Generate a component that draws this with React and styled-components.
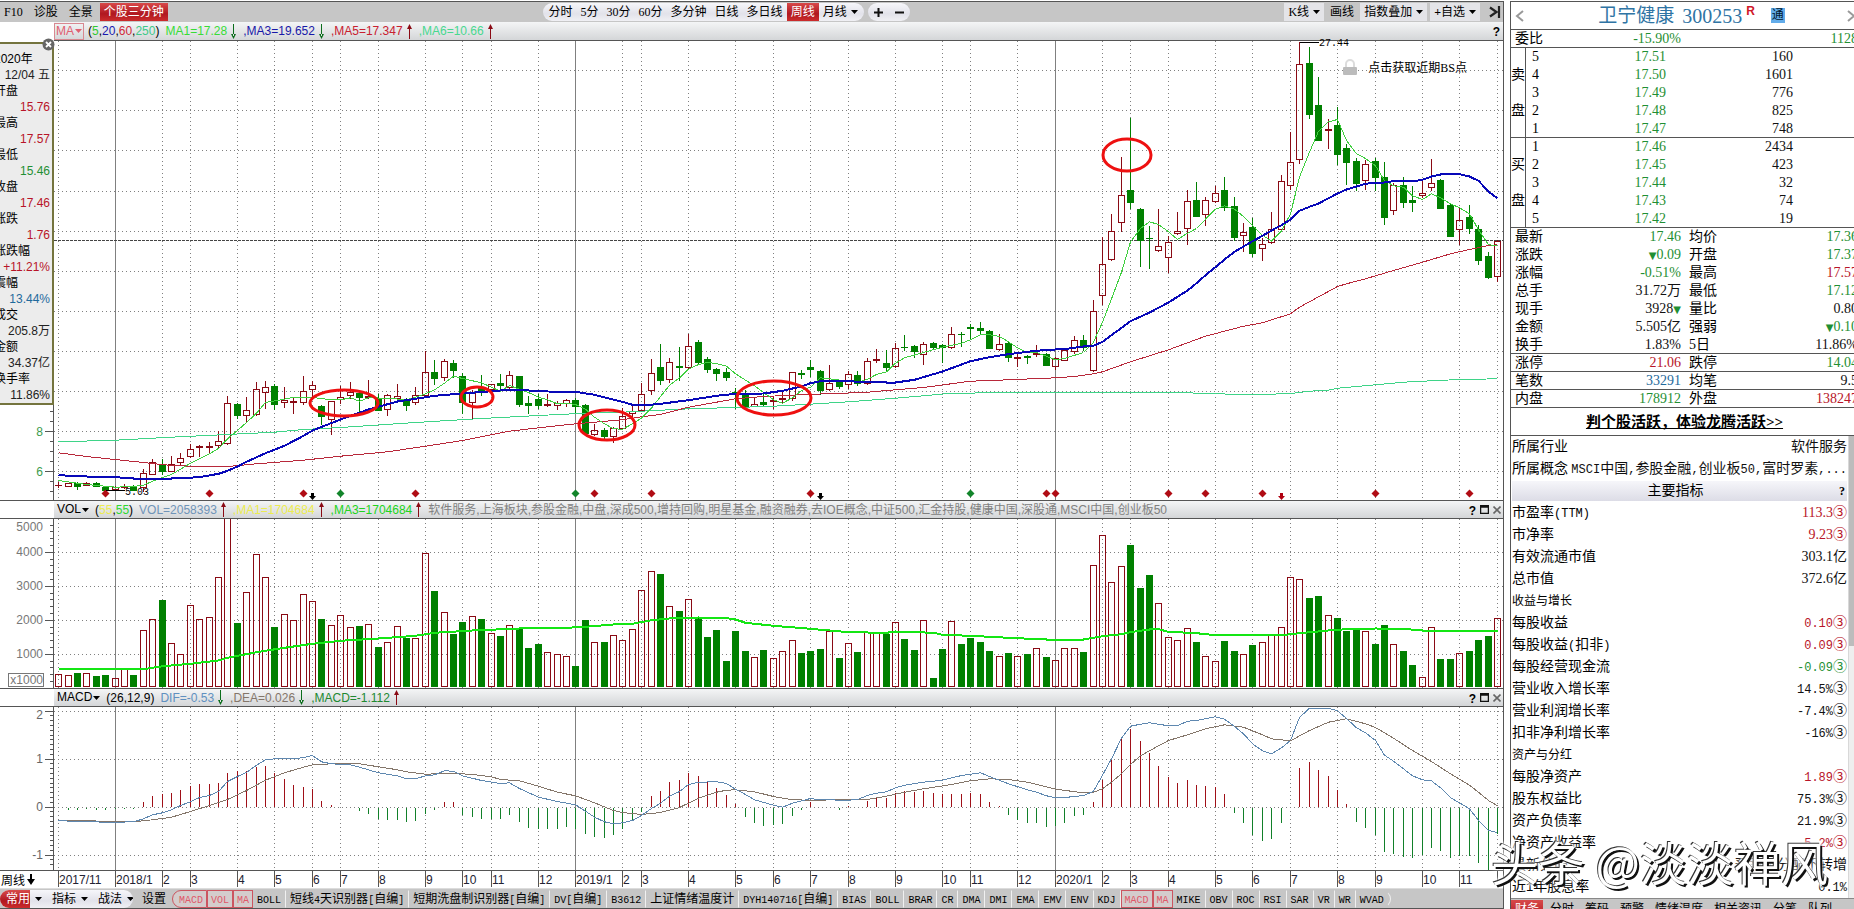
import React from "react";
import styled, { createGlobalStyle, css } from "styled-components";

const RED = "#8a0a14";
const GREEN = "#008000";
const LINE = "#555555";
const NUM_RED = "#b81428";
const NUM_GREEN = "#1f8f33";
const NUM_BLUE = "#1f6a9c";

const GlobalStyle = createGlobalStyle`
  * { box-sizing: border-box; }
  body {
    margin: 0;
    overflow: hidden;
    background: #fff;
    color: #000;
    font-family: "Liberation Sans", "Noto Sans CJK SC", sans-serif;
    font-size: 12px;
  }
  button {
    margin: 0;
    padding: 0;
    border: 0;
    background: none;
    color: inherit;
    font: inherit;
    white-space: nowrap;
  }
`;

/* ---------- data ---------- */

const BARS = 154;
const PLOT_W = 1449;
const colX = (i) => Math.floor(4.6 + 9.404 * i);

// Each candle: direction (r up, g down), high, body top, body bottom, low,
// in thirds of a pixel below the origin given for its period.
const EARLY = `r577,586,587,592 r579,581,590,590 g578,581,590,598 r577,581,587,587 g578,580,590,590
g588,592,600,602 r590,593,599,602 r582,590,592,596 g587,590,600,600 r537,550,592,604
r507,518,554,554 g507,524,545,552 r499,524,545,545 r489,506,518,522 r463,478,500,502
r466,470,473,498 r457,468,472,490 r423,454,467,474 r318,340,460,462 g341,343,376,385
r321,361,377,395 r276,298,373,377 r274,292,308,356 g282,289,344,358 r291,332,338,352
r322,333,338,370 r258,304,337,342 r273,286,298,328 g346,349,380,402 r334,334,388,434
r290,322,328,340 r276,308,317,324 g306,310,322,366 r270,320,323,326 g312,325,360,362
r313,317,359,377 r282,320,325,330 g326,328,345,360 r292,316,337,342 r184,248,317,322
g210,246,266,284 r208,214,263,272 g210,219,242,262 g250,259,338,370 r302,308,338,386
g256,296,300,316 r282,284,298,312 g252,279,285,300 r243,256,292,294 g258,259,344,350
g320,340,346,370 g312,327,345,354 r312,342,346,348 r334,341,346,358 r327,332,341,350
g325,331,350,370 g342,346,430,434 r402,420,434,436 g416,420,440,446 r412,416,440,458
r354,379,415,418 r345,364,370,382 r280,313,361,362 r207,250,302,312 g162,231,271,284
r204,217,269,278 g171,229,233,272 r132,169,233,236 g152,156,218,222 g202,207,239,248
g234,237,251,271 g234,246,263,271 g296,308,311,354 g300,316,348,350 r322,344,349,350
g312,337,344,346 r318,330,334,354 r300,325,329,336 r247,248,325,332 g240,249,252,264
g211,232,238,260 g241,243,302,314 r226,280,299,300 g270,274,288,296 r244,253,283,294
g244,255,281,286 r205,214,280,282 r177,207,211,216 g181,219,231,242 r160,175,230,232
g136,172,173,180 g166,168,185,202 r157,163,193,224 g156,159,173,175 g164,166,171,216
r111,133,173,176 g126,132,134,170 g102,112,116,146 g96,115,122,134 g122,123,174,174
r132,163,178,180 g158,159,203,214 r190,202,204,230 g196,198,203,220 r166,189,193,199
g190,192,227,227 r202,206,229,238 r178,181,211,212 r139,151,185,190 g136,151,173,182
r30,64,241,244`;
const LATE = `r711,793,886,912 r642,694,778,780 r472,586,667,695 g354,570,606,626 g626,627,722,798
g678,714,716,804 r627,739,751,754 r708,727,772,818 r636,694,700,704 r570,604,685,734
g546,600,648,648 r592,601,643,676 r558,580,604,606 g531,570,621,632 g592,618,713,720
r670,697,706,754 g654,681,759,768 r716,733,745,780 r636,688,727,730 r526,544,688,690
r396,487,556,568 r127,193,479,490 g142,189,342,356 g231,315,420,422 r357,387,391,446
g321,375,462,492 g434,444,488,554 g476,483,549,572 r480,493,542,569 g474,483,531,572
g486,531,651,674 r550,556,631,644 g532,555,606,622 g559,600,608,634 r540,580,586,592
r478,550,563,570 g538,540,624,624 g614,615,708,708 r624,661,688,732 g615,651,684,700
g676,687,782,794 g757,768,833,836 r720,723,829,845`;

const PRICE_TOP = 41;
const earlyY = (v) => 290 + v / 3 - PRICE_TOP;
const lateY = (v) => v / 3 - PRICE_TOP;

const parseCandles = (text, toY) =>
  text.split(/\s+/).map((item) => ({
    up: item[0] === "r",
    y: item.slice(1).split(",").map((v) => Math.floor(toY(Number(v)))),
  }));
const CANDLES = [...parseCandles(EARLY, earlyY), ...parseCandles(LATE, lateY)];

const VOLUME = [
  223, 226, 219, 220, 228, 225, 235, 208, 225, 91, 58, 0, 130, 163, 16, 58, 52, -68, -245, 69,
  -23, -137, -68, 81, 43, 61, -17, 4, 57, 76, 46, 82, 78, 73, 141, 127, 79, 115, 115, -140,
  -27, 37, 102, 66, 49, 57, 100, 108, 76, 88, 144, 132, 157, 163, 169, 198, 60, 127, 126, 106,
  121, 88, -29, -86, -78, 19, 33, -2, 52, 111, 90, 183, 93, 153, 172, 150, 175, 154, 121, 159,
  153, 147, 94, 174, 130, 156, 97, 97, 102, 67, 117, 150, 61, 234, 147, 64, 132, 114, 126, 153,
  169, 159, 169, 162, 145, 171, 181, 145, 145, 156, -104, -194, -53, -101, -165, -36, -75, 10, 112, 121,
  85, 126, 169, 184, 123, 153, 163, 135, 127, 106, 82, -68, -62, -6, -12, 46, 54, 93, 90, 94,
  132, 75, 133, 153, 195, 232, 82, 177, 177, 160, 153, 120, 108, 55,
];

const MACD_BARS = [
  622, 627, 628, 624, 628, 629, 626, 626, 624, 606, 588, 584, 579, 570, 558, 552, 552, 549, 519, 513,
  514, 501, 499, 519, 538, 555, 561, 568, 603, 615, 622, 622, 632, 640, 656, 657, 657, 665, 660, 640,
  629, 606, 606, 643, 648, 654, 656, 654, 644, 665, 681, 686, 686, 684, 678, 684, 700, 709, 713, 704,
  684, 662, 634, 588, 573, 546, 541, 519, 528, 544, 564, 585, 612, 648, 666, 675, 674, 671, 645, 627,
  608, 622, 622, 628, 619, 622, 603, 591, 594, 579, 573, 576, 573, 579, 583, 582, 583, 580, 583, 606,
  618, 642, 657, 666, 666, 678, 675, 666, 646, 644, 606, 540, 474, 411, 387, 423, 459, 498, 531, 549,
  540, 555, 558, 561, 583, 636, 666, 704, 720, 716, 668, 622, 504, 486, 510, 528, 571, 612, 663, 681,
  704, 755, 759, 770, 773, 764, 743, 750, 773, 767, 767, 788, 809, 700,
];

const BLUE_A = "0 554 3 558 6 560 8 564 12 564 15 560 17 550 18 541 19 528 20 514 22 488 24 466 26 436 27 420 30 387 33 357 36 333 38 325 40 316 43 309 46 302 48 298 50 300 52 303 55 304 57 313 60 334 61 343 62 345 64 340 67 329 70 316 72 310 75 309 77 301 79 288 80 278 81 272 83 272 86 274 88 276 89 276 91 268 94 243 97 212 99 200 101 191 103 184 105 178 107 176 109 168 110 166 111 154 114 92 116 66 118 36";
const BLUE_B = "120 870 121 848 122 824 123 800 124 777 125 754 126 738 127 722 128 706 129 690 130 674 131 657 132 631 133 619 134 609 136 579 137 567 138 558 139 550 140 547 141 546 142 542 144 543 145 538 146 528 147 522 149 521 150 528 151 541 152 573 153 594";
const RED_A = "0 487 3 498 7 510 12 525 16 529 18 528 21 520 26 509 30 497 35 484 39 467 43 450 48 422 52 409 55 400 57 395 60 388 62 379 64 372 67 350 72 325 75 318 78 314 80 311 82 310 86 305 89 298 92 291 97 272 101 268 106 262 108 258 109 254 110 250 111 244 114 214 118 178 122 137 126 107 128 97 131 70 132 50";
const RED_B = "136 858 137 850 139 835 142 810 145 785 148 760 150 747 152 735 153 733";
const MINT_A = "0 454 6 449 12 440 18 432 23 425 26 417 30 411 38 396 45 384 51 375 56 368 61 364 62 362 67 355 72 351 76 347 80 341 84 334 89 323 92 316 95 308 100 307 111 306 116 305 118 307 123 308 125 313 128 312 131 309 133 302 135 299 136 293 140 283 143 275 145 272 149 267 153 265";
const LIME_A = "0 570 3 582 6 590 8 588 9 584 10 572 12 552 14 518 16 490 17 474 18 445 19 420 20 396 21 368 22 336 24 326 25 320 27 320 28 325 30 328 31 322 32 332 33 322 35 323 37 328 38 320 39 310 40 298 41 278 42 257 43 264 45 277 47 302 48 285 49 296 50 306 51 320 52 328 53 340 54 338 55 342 56 356 57 380 58 400 59 415 60 416 61 400 62 383 63 353 64 318 65 284 66 262 67 236 68 222 69 216 70 219 71 227 72 250 74 286 76 328 77 338 78 322 79 300 80 290 81 262 82 265 84 272 85 276 86 266 87 252 88 244 89 218 90 202 92 186 94 170 96 158 97 148 98 133 99 133 100 138 101 154 102 172 103 186 104 186 106 208 107 204 109 186 110 155 111 95";
const LIME_B = "112 895 113 815 114 724 115 684 116 664 117 672 118 694 119 717 120 698 121 684 122 656 123 626 124 616 125 626 126 648 127 676 128 704 129 722 130 692 131 640 132 530 133 455 134 392 135 364 136 357 137 420 138 460 139 474 140 496 141 540 142 556 143 560 144 586 145 597 146 580 147 592 148 610 149 622 150 640 151 688 152 733 153 735";
const VOL_MA = "0 204 4 204 5 206 9 206 10 202 11 197 14 190 17 180 18 172 21 155 24 142 27 130 30 121 34 114 38 106 40 97 44 90 49 84 54 82 56 79 59 72 61 70 63 59 65 54 68 51 71 53 72 57 73 67 76 76 80 85 84 95 88 97 89 93 93 97 94 103 97 106 101 112 105 117 109 117 110 112 111 107 113 101 114 95 116 87 117 86 118 94 121 98 123 104 130 104 132 98 135 90 137 86 140 84 143 85 145 90 153 90";
const DIF = "0 659 1 662 4 664 5 666 8 664 9 655 10 643 11 637 12 628 13 615 14 604 15 591 16 585 17 573 18 543 19 528 20 516 21 494 22 478 23 475 25 475 26 471 27 465 28 484 29 490 31 493 32 500 34 517 36 526 37 535 38 535 39 526 40 523 41 511 42 512 43 526 45 540 47 549 48 547 49 564 51 590 53 603 55 613 56 632 57 650 58 664 59 670 60 667 61 660 62 645 63 624 64 608 65 587 66 573 67 552 68 545 70 544 71 549 72 566 73 582 74 598 76 614 77 620 78 608 79 601 80 594 81 598 84 599 85 597 86 585 87 578 88 574 89 562 90 554 92 545 94 539 96 525 98 517 99 528 101 550 103 568 104 575 105 586 106 592 107 592 108 587 109 586 110 572 111 524 112 475 113 413 114 377 115 371 116 367 118 376 119 376 120 362 121 360 123 349 124 356 125 378 126 400 127 430 128 451 129 460 130 442 131 420 132 351 133 323 135 323 136 331 137 354 138 382 139 397 140 420 141 464 142 482 143 505 144 526 145 538 146 541 147 562 148 592 149 607 150 625 151 660 152 690 153 696";
const DEA = "0 659 8 664 10 658 12 650 14 633 16 615 18 597 20 570 22 539 24 517 26 500 27 493 29 490 32 490 34 499 36 508 37 514 39 521 42 518 44 522 46 529 47 537 49 541 51 557 53 575 55 586 57 607 59 630 60 636 62 642 64 636 66 621 68 593 70 575 71 569 72 568 74 574 76 588 78 598 80 599 86 597 88 587 90 575 92 565 95 552 97 541 99 535 101 537 103 545 106 566 109 577 110 575 111 565 112 545 113 520 114 492 115 466 117 436 118 420 120 403 122 385 124 373 126 380 128 403 129 415 131 421 133 390 135 365 137 355 139 370 140 381 142 413 144 450 146 483 148 520 150 554 151 575 152 600 153 616";

const toPoints = (text, toY) => {
  const nums = text.split(" ").map(Number);
  const out = [];
  for (let i = 0; i < nums.length; i += 2) {
    out.push(`${colX(nums[i]) + 0.5},${(toY(nums[i + 1]) + 0.5).toFixed(1)}`);
  }
  return out.join(" ");
};

const MONTHS = [
  [0, "2017/11"], [6, "2018/1"], [11, "2"], [14, "3"], [19, "4"], [23, "5"], [27, "6"], [30, "7"],
  [34, "8"], [39, "9"], [43, "10"], [46, "11"], [51, "12"], [55, "2019/1"], [60, "2"], [62, "3"],
  [67, "4"], [72, "5"], [76, "6"], [80, "7"], [84, "8"], [89, "9"], [94, "10"], [97, "11"],
  [102, "12"], [106, "2020/1"], [111, "2"], [114, "3"], [118, "4"], [123, "5"], [127, "6"],
  [131, "7"], [136, "8"], [140, "9"], [145, "10"], [149, "11"], [153, ""],
];

const EVENTS = [
  [5, RED], [16, RED], [26, RED], [30, GREEN], [38, RED], [55, GREEN], [57, RED], [63, RED],
  [80, RED], [97, GREEN], [105, RED], [106, RED], [118, RED], [122, RED], [128, RED], [140, RED],
  [150, RED],
];
const DROPS = [[27, "#000"], [81, "#000"], [130, "#b00010"]];

const CIRCLES = [
  [290, 362, 34, 13], [423, 356, 16, 10], [553, 384, 28, 15], [720, 357, 37, 17], [1073, 114, 24, 16],
];

const CONCEPTS =
  "软件服务,上海板块,参股金融,中盘,深成500,增持回购,明星基金,融资融券,去IOE概念,中证500,汇金持股,健康中国,深股通,MSCI中国,创业板50";

/* ---------- shared pieces ---------- */

const MonoRun = styled.span`
  font-family: "Liberation Mono", monospace;
  font-size: ${(p) => p.$size}px;
  line-height: 1;
`;

// Sets the half-width runs of a label in the terminal's monospace face.
function Mixed({ text, size }) {
  return text
    .split(/([\x20-\x7e]+)/)
    .filter(Boolean)
    .map((part, i) =>
      /^[\x20-\x7e]/.test(part) ? <MonoRun key={i} $size={size}>{part}</MonoRun> : <span key={i}>{part}</span>
    );
}

const Caret = () => (
  <svg width="7" height="4" viewBox="0 0 7 4" aria-hidden="true">
    <path d="M0 0H7L3.5 4Z" fill="currentColor" />
  </svg>
);

const ArrowIcon = styled.svg`
  margin-left: -3px;
`;

const Arrow = ({ up }) => (
  <ArrowIcon width="7" height="15" viewBox="0 0 7 15" aria-hidden="true">
    {up ? (
      <path d="M3 3H4V15H3ZM3.5 0L6 5H1Z" fill={RED} />
    ) : (
      <path d="M3 0H4V12H3ZM3.5 15L6 10H1Z" fill="#0b6e1c" />
    )}
  </ArrowIcon>
);

/* ---------- frame ---------- */

const Page = styled.div`
  display: flex;
  gap: 6px;
  height: 100vh;
  padding-top: 1px;
  overflow: hidden;
`;

const Terminal = styled.main`
  flex: 1;
  min-width: 0;
  align-self: flex-start;
  border-top: 1px solid ${LINE};
  border-right: 1px solid ${LINE};
  border-bottom: 1px solid ${LINE};
`;

const Toolbar = styled.header`
  display: flex;
  align-items: center;
  justify-content: space-between;
  height: 20px;
  background: #c6c6c6;
  font-family: "Liberation Serif", "Noto Sans CJK SC", serif;
  line-height: 18px;
`;

const Group = styled.div`
  display: flex;
  align-items: center;
  height: 100%;
  gap: ${(p) => p.$gap || 0}px;
`;

const InfoLinks = styled(Group)`
  padding-left: 4px;
`;

const pillSurface = "linear-gradient(#f6f6fa, #e2e2ea 60%, #f0f0f4)";
const hotSurface = "linear-gradient(#d84a4a, #b01820 60%, #cc2c2c)";

const Periods = styled.div`
  display: flex;
  gap: 4px;
`;

const Pill = styled.div`
  display: flex;
  align-items: center;
  height: 18px;
  padding: 0 6px;
  gap: ${(p) => p.$gap}px;
  border-radius: 9px;
  background: ${pillSurface};
`;

const ToolButton = styled.button`
  display: inline-flex;
  align-items: center;
  gap: 4px;
  height: 18px;
  ${(p) =>
    p.$active &&
    css`
      padding: 0 4px;
      margin: 0 -4px;
      color: #fff;
      background: ${hotSurface};
    `}
  ${(p) =>
    p.$boxed &&
    css`
      padding: 0 4px;
      background: #e4e4e8;
    `}
`;

const Feature = styled(ToolButton)`
  padding: 0 4px;
  margin: 0 0 0 -4px;
`;

const EndButton = styled.button`
  display: flex;
  margin: 0 2px 0 6px;
`;

/* ---------- chart panes ---------- */

const Pane = styled.section`
  display: grid;
  grid-template-columns: 54px minmax(0, 1fr);
`;

const AxisColumn = styled.div`
  display: flex;
  flex-direction: column;
`;

const AxisHead = styled.div`
  height: ${(p) => (p.$first ? 20 : 18)}px;
  border-bottom: ${(p) => (p.$first ? "0" : `1px solid ${LINE}`)};
`;

const PaneHead = styled.div`
  display: flex;
  align-items: center;
  justify-content: space-between;
  height: ${(p) => (p.$first ? 19 : 18)}px;
  border-bottom: 1px solid ${LINE};
  background: linear-gradient(#f4f5f6, #d4d6d8);
  line-height: 16px;
  white-space: nowrap;
`;

const Readings = styled.div`
  display: flex;
  align-items: center;
  gap: 6px;
  padding-left: ${(p) => (p.$boxed ? 0 : 3)}px;
`;

const Reading = styled.span`
  color: ${(p) => p.$color};
`;

const IndicatorButton = styled.button`
  display: inline-flex;
  align-items: center;
  gap: 1px;
  line-height: 15px;
  ${(p) =>
    p.$framed &&
    css`
      padding: 0 1px;
      margin-right: -2px;
      color: #e06070;
      border: 1px solid #d88890;
    `}
`;

const HeadTools = styled.div`
  display: flex;
  align-items: center;
  gap: 3px;
  padding-right: 2px;
`;

const HeadTool = styled.button`
  display: grid;
  place-items: center;
  width: 9px;
  height: 14px;
  font-weight: bold;
`;

const Plot = styled.svg`
  display: block;
  width: 100%;
  height: ${(p) => p.$h}px;
  overflow: ${(p) => (p.$spill ? "visible" : "hidden")};
`;

const Scale = styled.svg`
  display: block;
  width: 54px;
  height: ${(p) => p.$h}px;
  font-family: "Liberation Sans", sans-serif;
  font-size: 12px;
`;

const PlotWrap = styled.div`
  position: relative;
  border-bottom: 1px solid ${LINE};
`;

const ScaleWrap = styled.div`
  border-bottom: 1px solid ${LINE};
`;

const BsButton = styled.button`
  position: absolute;
  top: 17px;
  right: 36px;
  display: flex;
  align-items: center;
  gap: 11px;
  font-family: "Liberation Serif", "Noto Sans CJK SC", serif;
`;

const isNewYear = (i, label) => i > 0 && label.includes("/1");

function Grid({ height, rows }) {
  return (
    <g shapeRendering="crispEdges" stroke="#808080">
      {MONTHS.map(([i, label]) => (
        <line
          key={i}
          x1={colX(i) + 0.5}
          x2={colX(i) + 0.5}
          y1="0"
          y2={height}
          strokeDasharray={isNewYear(i, label) ? "none" : "1 3"}
        />
      ))}
      {rows.map((y) => (
        <line key={y} x1="0" x2={PLOT_W} y1={y + 0.5} y2={y + 0.5} strokeDasharray="1 3" />
      ))}
    </g>
  );
}

function Canvas({ height, children }) {
  return (
    <svg width="100%" height="100%" viewBox={`0 0 ${PLOT_W} ${height}`} preserveAspectRatio="none" overflow="visible">
      {children}
    </svg>
  );
}

const pct = (x) => `${((x / PLOT_W) * 100).toFixed(3)}%`;

const PlotText = styled.text`
  font-family: "Liberation Mono", monospace;
  font-size: 10px;
`;

function PricePlot() {
  const h = 459;
  return (
    <Plot $h={h} $spill role="img" aria-label="周线K线图">
      <Canvas height={h}>
        <Grid height={h} rows={[29, 69, 109, 150, 190, 230, 270, 310, 350, 390, 430]} />
        <line x1="0" x2={PLOT_W} y1="199.5" y2="199.5" stroke="#444" strokeDasharray="3 1" shapeRendering="crispEdges" />
        <g shapeRendering="crispEdges">
          {CANDLES.map(({ up, y: [hi, top, bottom, lo] }, i) => {
            const x = colX(i);
            const color = up ? RED : GREEN;
            const hollow = up && bottom - top >= 2;
            return (
              <g key={i} stroke={color}>
                {hi < top && <line x1={x + 0.5} x2={x + 0.5} y1={hi} y2={top} />}
                {lo > bottom && <line x1={x + 0.5} x2={x + 0.5} y1={bottom} y2={lo + 1} />}
                {hollow ? (
                  <rect x={x - 2.5} y={top + 0.5} width="6" height={bottom - top} fill="none" />
                ) : (
                  <rect x={x - 3} y={top} width="7" height={bottom - top + 1} fill={color} stroke="none" />
                )}
              </g>
            );
          })}
        </g>
        <g fill="none" shapeRendering="crispEdges">
          <polyline points={toPoints(MINT_A, earlyY)} stroke="#3fd488" />
          <polyline points={`${toPoints(RED_A, earlyY)} ${toPoints(RED_B, lateY)}`} stroke="#b8283a" />
          <polyline points={`${toPoints(LIME_A, earlyY)} ${toPoints(LIME_B, lateY)}`} stroke="#3fcf3f" />
          <polyline points={`${toPoints(BLUE_A, earlyY)} ${toPoints(BLUE_B, lateY)}`} stroke="#0808b8" strokeWidth="2" />
        </g>
        <g fill="none" stroke="#ee1010" strokeWidth="3">
          {CIRCLES.map(([cx, cy, rx, ry]) => (
            <ellipse key={cx} cx={cx} cy={cy} rx={rx} ry={ry} />
          ))}
        </g>
        {EVENTS.map(([i, color]) => (
          <path key={i} d={`M${colX(i) + 0.5} 448.5l4 4l-4 4l-4 -4z`} fill={color === RED ? "#b00c14" : "#12852a"} />
        ))}
        {DROPS.map(([i, color]) => (
          <path key={i} d={`M${colX(i) - 1} 452h3v3h2l-3.5 4l-3.5 -4h2z`} fill={color} />
        ))}
        <path d="M1245.5 1.5H1265M52 449.5H71" stroke="#000" fill="none" shapeRendering="crispEdges" />
      </Canvas>
      <PlotText x={pct(1265)} y="5">27.44</PlotText>
      <PlotText x={pct(71)} y="454">5.03</PlotText>
    </Plot>
  );
}

function VolumePlot() {
  const h = 169;
  const toY = (v) => 600 + v / 3 - 519;
  const base = 168;
  return (
    <Plot $h={h} role="img" aria-label="成交量">
      <Canvas height={h}>
        <Grid height={h} rows={[33, 67, 101, 135]} />
        <g shapeRendering="crispEdges">
          {VOLUME.slice(0, BARS).map((v, i) => {
            const x = colX(i);
            const y = Math.floor(toY(v));
            return CANDLES[i].up ? (
              <rect key={i} x={x - 2.5} y={y + 0.5} width="6" height={base - y - 1} fill="none" stroke={RED} />
            ) : (
              <rect key={i} x={x - 3} y={y} width="7" height={base - y} fill={GREEN} />
            );
          })}
        </g>
        <polyline points={toPoints(VOL_MA, toY)} fill="none" stroke="#14e614" strokeWidth="2" shapeRendering="crispEdges" />
      </Canvas>
    </Plot>
  );
}

function MacdPlot() {
  const h = 163;
  const toY = (v) => 600 + v / 3 - 707;
  const zero = 100;
  return (
    <Plot $h={h} role="img" aria-label="MACD">
      <Canvas height={h}>
        <Grid height={h} rows={[4, 52, 100, 148]} />
        <g shapeRendering="crispEdges">
          {MACD_BARS.map((v, i) => {
            const y = Math.round(toY(v) - 0.3);
            if (y === zero) return null;
            return (
              <line
                key={i}
                x1={colX(i) + 0.5}
                x2={colX(i) + 0.5}
                y1={y < zero ? y : zero + 1}
                y2={y < zero ? zero : y + 1}
                stroke={y < zero ? "#a01018" : "#12802a"}
              />
            );
          })}
        </g>
        <polyline points={toPoints(DEA, toY)} fill="none" stroke="#84766a" shapeRendering="crispEdges" />
        <polyline points={toPoints(DIF, toY)} fill="none" stroke="#5f88b0" shapeRendering="crispEdges" />
      </Canvas>
    </Plot>
  );
}

function Ticks({ from, to, step, major, every }) {
  const marks = [];
  for (let n = 0, y = from; y < to; n += 1, y = from + n * step) {
    const big = (n - major + every * 20) % every === 0;
    marks.push(<line key={n} x1={big ? 45 : 50} x2="54" y1={Math.floor(y) + 0.5} y2={Math.floor(y) + 0.5} />);
  }
  return (
    <g stroke={LINE} shapeRendering="crispEdges">
      {marks}
      <line x1="53.5" x2="53.5" y1="0" y2={to + 10} />
    </g>
  );
}

const ScaleLabels = ({ items, color }) => (
  <g fill={color} textAnchor="end">
    {items.map(([y, label]) => (
      <text key={label} x="43" y={y + 4}>{label}</text>
    ))}
  </g>
);

/* ---------- day details card ---------- */

const DayCard = styled.aside`
  position: relative;
  margin-left: -6px;
  width: 60px;
  height: 363px;
  padding: 7px 2px 0 0;
  border: 2px solid #74743e;
  border-left: 0;
  background: #ececec;
  line-height: 16px;
`;

const DayList = styled.dl`
  margin: 0;
`;

const DayLabel = styled.dt`
  height: 16px;
  white-space: nowrap;
`;

const DayValue = styled.dd`
  height: 16px;
  margin: 0;
  text-align: right;
  white-space: nowrap;
  color: ${(p) => p.$color || "#222"};
`;

const CloseButton = styled.button`
  position: absolute;
  top: -6px;
  right: -3px;
  width: 13px;
  height: 13px;
`;

const DAY = [
  ["2020年", "12/04 五"],
  ["开盘", "15.76", NUM_RED],
  ["最高", "17.57", NUM_RED],
  ["最低", "15.46", NUM_GREEN],
  ["收盘", "17.46", NUM_RED],
  ["涨跌", "1.76", NUM_RED],
  ["涨跌幅", "+11.21%", NUM_RED],
  ["震幅", "13.44%", NUM_BLUE],
  ["成交", "205.8万"],
  ["金额", "34.37亿"],
  ["换手率", "11.86%"],
];

/* ---------- date row and indicator tabs ---------- */

const DateRow = styled.div`
  display: grid;
  grid-template-columns: 54px minmax(0, 1fr);
  height: 17px;
`;

const PeriodButton = styled.button`
  display: flex;
  align-items: center;
  gap: 1px;
  height: 17px;
  padding-left: 1px;
`;

const TabBar = styled.nav`
  display: flex;
  align-items: center;
  height: 20px;
  background: #c6c6c6;
  border-top: 1px solid #dcdcdc;
  line-height: 18px;
`;

const MenuGroup = styled.div`
  display: flex;
  align-items: center;
  height: 18px;
  gap: 10px;
  width: 133px;
  border-radius: 9px;
  overflow: hidden;
  background: ${pillSurface};
`;

const MenuButton = styled.button`
  display: flex;
  align-items: center;
  gap: 5px;
  height: 18px;
`;

const Hot = styled.span`
  padding: 0 0 0 6px;
  color: #fff;
  background: ${hotSurface};
`;

const SettingsButton = styled.button`
  margin: 0 6px 0 9px;
`;

const Tab = styled.button`
  display: flex;
  flex-shrink: 0;
  align-items: center;
  height: 18px;
  padding: 0 4px 0 3px;
  border: 1px solid transparent;
  border-right-color: #f0f0f0;
  ${(p) =>
    p.$on &&
    css`
      padding-right: 3px;
      color: #e05868;
      border-color: #cc5560;
      background: #d4cccc;
    `}
  ${(p) =>
    p.$edge === "first" &&
    css`
      padding-left: 6px;
      border-radius: 9px 0 0 9px;
    `}
  ${(p) =>
    p.$edge === "last" &&
    css`
      padding-right: 6px;
      border-radius: 0 9px 9px 0;
    `}
`;

const TABS = [
  "*MACD", "*VOL", "*MA", "BOLL", "短线4天识别器[自编]", "短期洗盘制识别器[自编]", "DV[自编]", "B3612",
  "上证情绪温度计", "DYH140716[自编]", "BIAS", "BOLL", "BRAR", "CR", "DMA", "DMI", "EMA", "EMV", "ENV",
  "KDJ", "*MACD", "*MA", "MIKE", "OBV", "ROC", "RSI", "SAR", "VR", "WR", "WVAD",
];

/* ---------- quote panel ---------- */

const Quote = styled.aside`
  flex: 0 0 344px;
  border-top: 1px solid ${LINE};
  border-left: 1px solid ${LINE};
  overflow: hidden;
  font-family: "Liberation Serif", "Noto Sans CJK SC", serif;
  font-size: 14px;
  line-height: 16px;
`;

const QuoteHead = styled.div`
  display: flex;
  align-items: center;
  justify-content: space-between;
  height: 28px;
  padding-left: 4px;
  border-bottom: 1px solid ${LINE};
`;

const StockName = styled.h1`
  display: flex;
  align-items: center;
  gap: 8px;
  margin: 0;
  padding-left: 14px;
  color: #2f74a4;
  font-size: 19px;
  font-weight: normal;
  line-height: 28px;
`;

const StockCode = styled.span`
  font-size: 20px;
`;

const Rating = styled.sup`
  align-self: flex-start;
  margin-left: -4px;
  color: #d01828;
  font: bold 12px/18px "Liberation Sans", sans-serif;
`;

const LinkBadge = styled.span`
  margin-left: 8px;
  padding: 0 1px;
  color: #001830;
  background: #62acea;
  font-size: 12px;
  line-height: 15px;
`;

const NavButton = styled.button`
  display: flex;
  width: 9px;
  color: #999;
`;

const Book = styled.table`
  width: calc(100% + 4px);
  table-layout: fixed;
  border-collapse: separate;
  border-spacing: 0;
`;

const BookRow = styled.tr`
  & > * {
    height: 18px;
    padding: 0;
    font-weight: normal;
    text-align: left;
    white-space: nowrap;
    border-bottom: ${(p) => (p.$ruled ? `1px solid ${LINE}` : "0")};
  }
`;

const SideCell = styled.th`
  && {
    line-height: 36px;
    white-space: normal;
    word-break: break-all;
    border-right: 1px solid ${LINE};
    border-bottom: 1px solid ${LINE};
  }
`;

const LabelCell = styled.th`
  && {
    padding-left: ${(p) => p.$pad}px;
  }
`;

const ValueCell = styled.td`
  && {
    text-align: right;
    color: ${(p) => p.$color || "#111"};
  }
`;

const Promo = styled.div`
  display: grid;
  place-items: center;
  height: 28px;
  border-bottom: 1px solid ${LINE};
`;

const PromoLink = styled.a`
  padding-left: 4px;
  color: #000;
  font-size: 15px;
  font-weight: bold;
`;

const Facts = styled.div`
  display: flex;
  height: 462px;
`;

const FactList = styled.dl`
  flex: 1;
  min-width: 0;
  margin: 0;
  padding: 0 1px;
`;

const Fact = styled.div`
  display: flex;
  align-items: center;
  justify-content: space-between;
  height: 22px;
  white-space: nowrap;
`;

const FactName = styled.dt`
  font-size: ${(p) => (p.$section ? 12 : 14)}px;
`;

const FactValue = styled.dd`
  margin: 0;
  color: ${(p) => p.$color || "#111"};
`;

const FactTitle = styled(Fact)`
  height: 20px;
  margin: 1px 0;
  padding-right: 2px;
  background: linear-gradient(#f6f6fa, #dcdce6);
`;

const TitleText = styled.dt`
  flex: 1;
  text-align: center;
`;

const TitleHelp = styled.dd`
  margin: 0;
  font-size: 12px;
  font-weight: bold;
`;

const ScrollTrack = styled.div`
  width: 6px;
  background: #eeeeee;
  border-left: 1px solid #d8d8d8;
`;

const ScrollThumb = styled.div`
  height: 210px;
  background: #bcbcbc;
`;

const QuoteTabs = styled.nav`
  display: flex;
  align-items: center;
  gap: 11px;
  height: 20px;
  background: #c6c6c6;
  border-top: 1px solid #888;
  font-size: 12px;
`;

const QuoteTab = styled.button`
  height: 18px;
  ${(p) =>
    p.$on &&
    css`
      padding: 0 4px;
      margin-right: -4px;
      color: #fff;
      background: linear-gradient(#d84a4a, #b01820);
    `}
`;

const Watermark = styled.div`
  position: fixed;
  right: 26px;
  bottom: 22px;
  color: #fff;
  font: 47px/52px "Noto Sans CJK SC", sans-serif;
  text-shadow: 2px 2px 0 #111, -1px -1px 0 #333, 0 0 4px #fff, 0 0 4px #fff, 0 0 5px #fff;
  white-space: nowrap;
  pointer-events: none;
`;

const SELL = [[5, "17.51", 160], [4, "17.50", 1601], [3, "17.49", 776], [2, "17.48", 825], [1, "17.47", 748]];
const BUY = [[1, "17.46", 2434], [2, "17.45", 423], [3, "17.44", 32], [4, "17.43", 74], [5, "17.42", 19]];

const STATS = [
  ["最新", "17.46", NUM_GREEN, "均价", "17.36", NUM_GREEN],
  ["涨跌", "▼0.09", NUM_GREEN, "开盘", "17.37", NUM_GREEN],
  ["涨幅", "-0.51%", NUM_GREEN, "最高", "17.57", NUM_RED],
  ["总手", "31.72万", "", "最低", "17.12", NUM_GREEN],
  ["现手", "3928▼", "", "量比", "0.80", ""],
  ["金额", "5.505亿", "", "强弱", "▼0.10", NUM_GREEN],
  ["换手", "1.83%", "", "5日", "11.86%", "", true],
  ["涨停", "21.06", NUM_RED, "跌停", "14.04", NUM_GREEN, true],
  ["笔数", "33291", NUM_BLUE, "均笔", "9.5", "", true],
  ["内盘", "178912", NUM_GREEN, "外盘", "138247", NUM_RED, true],
];

const FACTS = [
  ["市盈率(TTM)", "113.3③", NUM_RED, true],
  ["市净率", "9.23③", NUM_RED, true],
  ["有效流通市值", "303.1亿", "", true],
  ["总市值", "372.6亿", "", true],
  ["收益与增长"],
  ["每股收益", "0.10③", NUM_RED],
  ["每股收益(扣非)", "0.09③", NUM_RED],
  ["每股经营现金流", "-0.09③", NUM_GREEN],
  ["营业收入增长率", "14.5%③"],
  ["营业利润增长率", "-7.4%③"],
  ["扣非净利增长率", "-16%③"],
  ["资产与分红"],
  ["每股净资产", "1.89③", NUM_RED],
  ["股东权益比", "75.3%③"],
  ["资产负债率", "21.9%③"],
  ["净资产收益率", "5.2%③", NUM_RED],
  ["最新分配", "预案不分配不转增"],
  ["近1年股息率", "0.1%"],
];

const Down = styled.span`
  color: ${NUM_GREEN};
  font-family: "DejaVu Sans", sans-serif;
  font-size: 10px;
  line-height: 1;
`;

const withMarks = (text) =>
  text.split(/(▼)/).map((part, i) => (part === "▼" ? <Down key={i}>▼</Down> : part));

function OrderSide({ name, rows }) {
  return rows.map(([level, price, volume], i) => (
    <BookRow key={level} $ruled={i === 4}>
      {i === 0 && <SideCell rowSpan={5} scope="rowgroup">{name}</SideCell>}
      <LabelCell scope="row" $pad={6}>{level}</LabelCell>
      <ValueCell $color={NUM_GREEN}>{price}</ValueCell>
      <ValueCell>{volume}</ValueCell>
      <td />
    </BookRow>
  ));
}

function PairColumns() {
  return (
    <colgroup>
      <col width="50" />
      <col width="120" />
      <col width="60" />
      <col />
    </colgroup>
  );
}

function PaneTools({ helpOnly }) {
  return (
    <HeadTools>
      <HeadTool aria-label="帮助">?</HeadTool>
      {!helpOnly && (
        <>
          <HeadTool aria-label="最大化">
            <svg width="9" height="9" viewBox="0 0 9 9">
              <path d="M0.5 0.5H8.5V8.5H0.5Z M0 2H9" fill="none" stroke="#111" strokeWidth="1.5" />
            </svg>
          </HeadTool>
          <HeadTool aria-label="关闭">
            <svg width="8" height="8" viewBox="0 0 8 8">
              <path d="M0.5 0.5L7.5 7.5M7.5 0.5L0.5 7.5" stroke="#666" strokeWidth="1.6" />
            </svg>
          </HeadTool>
        </>
      )}
    </HeadTools>
  );
}

function PeriodPicker() {
  return (
    <Periods>
      <Pill $gap={8}>
        {["分时", "5分", "30分", "60分", "多分钟", "日线", "多日线"].map((p) => (
          <ToolButton key={p}>{p}</ToolButton>
        ))}
        <ToolButton $active>周线</ToolButton>
        <ToolButton>月线<Caret /></ToolButton>
      </Pill>
      <Pill $gap={12}>
        <ToolButton aria-label="放大">
          <svg width="9" height="9" viewBox="0 0 9 9"><path d="M4.5 0V9M0 4.5H9" stroke="#111" strokeWidth="2" /></svg>
        </ToolButton>
        <ToolButton aria-label="缩小">
          <svg width="9" height="9" viewBox="0 0 9 9"><path d="M0 4.5H9" stroke="#111" strokeWidth="2" /></svg>
        </ToolButton>
      </Pill>
    </Periods>
  );
}

export default function App() {
  return (
    <Page>
      <GlobalStyle />
      <Terminal>
        <Toolbar>
          <InfoLinks $gap={11}>
            <ToolButton>F10</ToolButton>
            <ToolButton>诊股</ToolButton>
            <ToolButton>全景</ToolButton>
            <Feature $active>个股三分钟</Feature>
          </InfoLinks>
          <PeriodPicker />
          <Group $gap={3}>
            <ToolButton $boxed>K线<Caret /></ToolButton>
            <ToolButton>&nbsp;画线&nbsp;</ToolButton>
            <ToolButton $boxed>指数叠加<Caret /></ToolButton>
            <ToolButton $boxed><span><b>+</b>自选</span><Caret /></ToolButton>
            <EndButton aria-label="收起">
              <svg width="12" height="12" viewBox="0 0 12 12">
                <path d="M1 1.5L7.5 6L1 10.5M10 0V12" fill="none" stroke="#222" strokeWidth="2.2" />
              </svg>
            </EndButton>
          </Group>
        </Toolbar>

        <Pane>
          <AxisColumn>
            <AxisHead $first />
            <DayCard>
              <CloseButton aria-label="关闭">
                <svg width="13" height="13" viewBox="0 0 13 13">
                  <circle cx="6.5" cy="6.5" r="6" fill="#666" />
                  <path d="M4 4L9 9M9 4L4 9" stroke="#fff" strokeWidth="1.8" />
                </svg>
              </CloseButton>
              <DayList>
                {DAY.map(([label, value, color]) => (
                  <React.Fragment key={label}>
                    <DayLabel>{label}</DayLabel>
                    <DayValue $color={color}>{value}</DayValue>
                  </React.Fragment>
                ))}
              </DayList>
            </DayCard>
            <ScaleWrap>
              <Scale $h={95}>
                <Ticks from={6} to={95} step={10} major={2} every={4} />
                <ScaleLabels color="#3c9c4c" items={[[27, "8"], [67, "6"]]} />
              </Scale>
            </ScaleWrap>
          </AxisColumn>
          <div>
            <PaneHead $first>
              <Readings $boxed>
                <IndicatorButton $framed>MA<Caret /></IndicatorButton>
                <span>
                  (<Reading $color="#30c830">5</Reading>,<Reading $color="#1818b0">20</Reading>,
                  <Reading $color="#d02838">60</Reading>,<Reading $color="#40c888">250</Reading>)
                </span>
                <Reading $color="#38dc38">MA1=17.28</Reading><Arrow />
                <Reading $color="#1818a8">,MA3=19.652</Reading><Arrow />
                <Reading $color="#c82030">,MA5=17.347</Reading><Arrow up />
                <Reading $color="#48d890">,MA6=10.66</Reading><Arrow up />
              </Readings>
              <PaneTools helpOnly />
            </PaneHead>
            <PlotWrap>
              <PricePlot />
              <BsButton>
                <svg width="14" height="16" viewBox="0 0 14 16">
                  <path d="M3 9V5a4 4 0 0 1 8 0v4" fill="none" stroke="#dcdcdc" strokeWidth="2" />
                  <rect x="0" y="8" width="14" height="8" rx="1" fill="#bcbcbc" />
                </svg>
                点击获取近期BS点
              </BsButton>
            </PlotWrap>
          </div>
        </Pane>

        <Pane>
          <AxisColumn>
            <AxisHead />
            <ScaleWrap>
              <Scale $h={169}>
                <Ticks from={6} to={168} step={6.8} major={4} every={5} />
                <ScaleLabels color="#777" items={[[8, "5000"], [33, "4000"], [67, "3000"], [101, "2000"], [135, "1000"], [161, "x1000"]]} />
                <rect x="8.5" y="154.5" width="35" height="13" fill="none" stroke="#777" />
              </Scale>
            </ScaleWrap>
          </AxisColumn>
          <div>
            <PaneHead>
              <Readings>
                <IndicatorButton>VOL<Caret /></IndicatorButton>
                <span>
                  (<Reading $color="#ecec50">55</Reading>,<Reading $color="#30d830">55</Reading>)
                </span>
                <Reading $color="#7094b8">VOL=2058393</Reading><Arrow up />
                <Reading $color="#ecec50">,MA1=1704684</Reading><Arrow up />
                <Reading $color="#20d420">,MA3=1704684</Reading><Arrow up />
                <Reading $color="#808080">{CONCEPTS}</Reading>
              </Readings>
              <PaneTools />
            </PaneHead>
            <PlotWrap><VolumePlot /></PlotWrap>
          </div>
        </Pane>

        <Pane>
          <AxisColumn>
            <AxisHead />
            <ScaleWrap>
              <Scale $h={163}>
                <Ticks from={4} to={162} step={4.8} major={0} every={10} />
                <ScaleLabels color="#666" items={[[8, "2"], [52, "1"], [100, "0"], [148, "-1"]]} />
              </Scale>
            </ScaleWrap>
          </AxisColumn>
          <div>
            <PaneHead>
              <Readings>
                <IndicatorButton>MACD<Caret /></IndicatorButton>
                <span>(26,12,9)</span>
                <Reading $color="#6090c0">DIF=-0.53</Reading><Arrow />
                <Reading $color="#84766a">,DEA=0.026</Reading><Arrow />
                <Reading $color="#208830">,MACD=-1.112</Reading><Arrow up />
              </Readings>
              <PaneTools />
            </PaneHead>
            <PlotWrap><MacdPlot /></PlotWrap>
          </div>
        </Pane>

        <DateRow>
          <PeriodButton>
            周线
            <svg width="10" height="11" viewBox="0 0 10 11">
              <path d="M4 0H6V5H9L5 11L1 5H4Z" fill="#000" />
            </svg>
          </PeriodButton>
          <Plot $h={17}>
            {MONTHS.map(([i, label]) => (
              <g key={i}>
                <rect x={pct(colX(i))} y="0" width="1" height="16" fill={LINE} shapeRendering="crispEdges" />
                <text x={pct(colX(i) + 1)} y="13" fontSize="12" fill="#223">{label}</text>
              </g>
            ))}
          </Plot>
        </DateRow>

        <TabBar>
          <MenuGroup>
            <MenuButton><Hot>常用</Hot><Caret /></MenuButton>
            <MenuButton>指标<Caret /></MenuButton>
            <MenuButton>战法<Caret /></MenuButton>
          </MenuGroup>
          <SettingsButton>设置</SettingsButton>
          {TABS.map((tab, i) => {
            const on = tab[0] === "*";
            return (
              <Tab
                key={i}
                $on={on}
                $edge={i === 0 ? "first" : i === TABS.length - 1 ? "last" : undefined}
              >
                <span><Mixed text={on ? tab.slice(1) : tab} size={10} /></span>
              </Tab>
            );
          })}
        </TabBar>
      </Terminal>

      <Quote>
        <QuoteHead>
          <NavButton aria-label="上一只">
            <svg width="9" height="12" viewBox="0 0 9 12"><path d="M8 1L2 6L8 11" fill="none" stroke="currentColor" strokeWidth="2" /></svg>
          </NavButton>
          <StockName>
            卫宁健康 <StockCode>300253</StockCode>
            <Rating>R</Rating>
            <LinkBadge>通</LinkBadge>
          </StockName>
          <NavButton aria-label="下一只">
            <svg width="9" height="12" viewBox="0 0 9 12"><path d="M3 1L9 6L3 11" fill="none" stroke="currentColor" strokeWidth="2" /></svg>
          </NavButton>
        </QuoteHead>

        <Book>
          <PairColumns />
          <tbody>
            <BookRow $ruled>
              <LabelCell scope="row" $pad={4}>委比</LabelCell>
              <ValueCell $color={NUM_GREEN}>-15.90%</ValueCell>
              <td />
              <ValueCell $color={NUM_GREEN}>1128</ValueCell>
            </BookRow>
          </tbody>
        </Book>
        <Book>
          <colgroup>
            <col width="15" />
            <col width="30" />
            <col width="110" />
            <col width="127" />
            <col />
          </colgroup>
          <tbody><OrderSide name="卖盘" rows={SELL} /></tbody>
          <tbody><OrderSide name="买盘" rows={BUY} /></tbody>
        </Book>
        <Book>
          <PairColumns />
          <tbody>
            {STATS.map(([a, av, ac, b, bv, bc, ruled]) => (
              <BookRow key={a} $ruled={ruled}>
                <LabelCell scope="row" $pad={4}>{a}</LabelCell>
                <ValueCell $color={ac}>{withMarks(av)}</ValueCell>
                <LabelCell scope="row" $pad={8}>{b}</LabelCell>
                <ValueCell $color={bc}>{withMarks(bv)}</ValueCell>
              </BookRow>
            ))}
          </tbody>
        </Book>

        <Promo><PromoLink href="#active">判个股活跃，体验龙腾活跃&gt;&gt;</PromoLink></Promo>

        <Facts>
          <FactList>
            <Fact><FactName>所属行业</FactName><FactValue>软件服务</FactValue></Fact>
            <Fact>
              <FactName>所属概念</FactName>
              <FactValue><Mixed text="MSCI中国,参股金融,创业板50,富时罗素,..." size={12} /></FactValue>
            </Fact>
            <FactTitle><TitleText>主要指标</TitleText><TitleHelp>?</TitleHelp></FactTitle>
            {FACTS.map(([name, value, color, roman]) => (
              <Fact key={name}>
                <FactName $section={!value}><Mixed text={name} size={12} /></FactName>
                {value && <FactValue $color={color}>{roman ? value : <Mixed text={value} size={12} />}</FactValue>}
              </Fact>
            ))}
          </FactList>
          <ScrollTrack><ScrollThumb /></ScrollTrack>
        </Facts>

        <QuoteTabs>
          <QuoteTab $on>财务</QuoteTab>
          {["分时", "筹码", "预警", "情绪温度", "相关资讯", "分笔", "队列"].map((t) => (
            <QuoteTab key={t}>{t}</QuoteTab>
          ))}
        </QuoteTabs>
      </Quote>

      <Watermark>头条 @淡淡禅风</Watermark>
    </Page>
  );
}
